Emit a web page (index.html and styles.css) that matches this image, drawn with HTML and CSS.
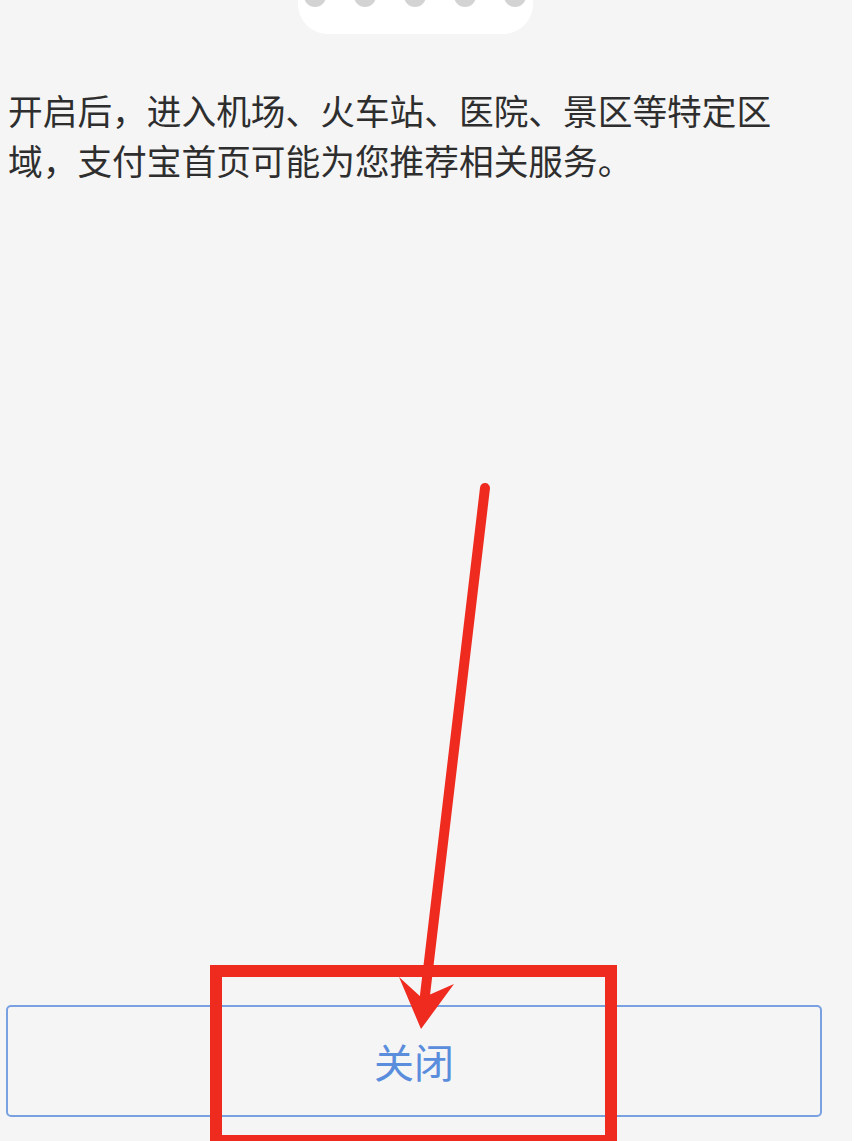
FILE: index.html
```html
<!DOCTYPE html>
<html lang="zh-CN">
<head>
<meta charset="utf-8">
<title>关闭</title>
<link rel="stylesheet" href="styles.css">
</head>
<body>
<div class="page">
  <div class="dots-card">
    <span class="dot"></span>
    <span class="dot"></span>
    <span class="dot"></span>
    <span class="dot"></span>
    <span class="dot"></span>
  </div>
  <p class="desc">开启后，进入机场、火车站、医院、景区等特定区域，支付宝首页可能为您推荐相关服务。</p>
  <button class="close-btn">关闭</button>
  <div class="mark-box"></div>
  <svg class="arrow" width="859" height="1141" viewBox="0 0 859 1141">
    <line x1="485" y1="488" x2="423" y2="1012" stroke="#ef2a1f" stroke-width="10" stroke-linecap="round"/>
    <polygon points="399,977 422,998 454,984 421,1029" fill="#ef2a1f"/>
  </svg>
</div>
</body>
</html>
```
FILE: styles.css
```css
html, body {
  margin: 0;
  padding: 0;
  background: #ffffff;
}
.page {
  position: relative;
  width: 852px;
  height: 1141px;
  background: #f5f5f5;
  overflow: hidden;
  display: flex;
  flex-direction: column;
  font-family: "Noto Sans CJK SC", "Noto Sans", sans-serif;
}
.dots-card {
  margin-left: 298px;
  width: 235px;
  height: 34px;
  background: #ffffff;
  border-radius: 0 0 30px 30px;
  display: flex;
  gap: 28px;
  padding-left: 6px;
  box-sizing: border-box;
}
.dot {
  width: 22px;
  height: 22px;
  border-radius: 50%;
  background: #d3d3d3;
  margin-top: -15px;
  flex: none;
}
.desc {
  margin: 51px 0 0 8px;
  width: 785px;
  font-size: 34.7px;
  line-height: 50px;
  color: #2e2e2e;
}
.close-btn {
  margin: auto 0 24px 6px;
  width: 816px;
  height: 112px;
  border: 2px solid #79a1e2;
  border-radius: 5px;
  background: transparent;
  color: #5b8ddd;
  font-family: "Noto Sans CJK SC", "Noto Sans", sans-serif;
  font-size: 40px;
  padding: 0;
}
.mark-box {
  position: absolute;
  left: 210px;
  top: 965px;
  width: 407px;
  height: 182px;
  border: 12px solid #ef2a1f;
  box-sizing: border-box;
}
.arrow {
  position: absolute;
  left: 0;
  top: 0;
}
```
